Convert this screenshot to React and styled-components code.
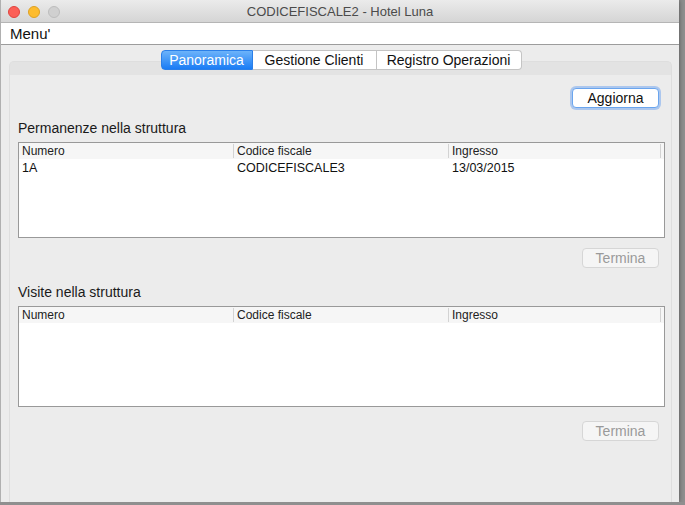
import React from 'react';
import styled, { createGlobalStyle, css } from 'styled-components';

const GlobalStyle = createGlobalStyle`
  html, body {
    margin: 0;
    padding: 0;
    background: #8f8f8f;
    overflow: hidden;
  }
  * {
    box-sizing: border-box;
  }
`;

const tabs = [
  { label: 'Panoramica', w: 92 },
  { label: 'Gestione Clienti', w: 124 },
  { label: 'Registro Operazioni', w: 145 },
];
const columns = ['Numero', 'Codice fiscale', 'Ingresso'];

const Window = styled.div`
  width: 679px;
  height: 502px;
  display: flex;
  flex-direction: column;
  background: #ececec;
  font-family: "Liberation Sans", Arial, sans-serif;
  color: #1a1a1a;
  box-shadow: 0 0 5px rgba(0, 0, 0, 0.45);
  border-left: 1px solid #b0b0b0;
`;

const TitleBar = styled.div`
  position: relative;
  height: 23px;
  display: flex;
  align-items: center;
  justify-content: center;
  background: linear-gradient(#ebebeb, #d5d5d5);
  border-bottom: 1px solid #b5b5b5;
  font-size: 13px;
  color: #4b4b4b;
`;

const Lights = styled.div`
  position: absolute;
  left: 7px;
  top: 6px;
  display: flex;
  gap: 8px;
`;

const Light = styled.span`
  width: 12px;
  height: 12px;
  border-radius: 50%;
  background: ${({ color }) => color};
  border: 1px solid ${({ edge }) => edge};
`;

const MenuBar = styled.div`
  height: 22px;
  display: flex;
  align-items: center;
  padding-left: 9px;
  background: #ffffff;
  border-bottom: 1px solid #9c9c9c;
  font-size: 15px;
  color: #111;
`;

const Body = styled.div`
  flex: 1;
  padding: 5px 7px 0 8px;
  display: flex;
  flex-direction: column;
`;

const TabStrip = styled.div`
  display: flex;
  justify-content: center;
  margin-bottom: -9px;
  position: relative;
  z-index: 1;
  padding-left: 1px;
`;

const Tab = styled.div`
  height: 20px;
  width: ${({ w }) => w}px;
  display: flex;
  align-items: center;
  justify-content: center;
  font-size: 14px;
  background: #ffffff;
  border: 1px solid #c4c4c4;
  border-left: none;
  color: #111;

  &:first-child {
    border-left: 1px solid #c4c4c4;
    border-radius: 4px 0 0 4px;
  }
  &:last-child {
    border-radius: 0 4px 4px 0;
  }

  ${({ active }) =>
    active &&
    css`
      background: linear-gradient(#6cb3fa, #1a7cf5);
      border-color: #2a7fe8 !important;
      color: #ffffff;
    `}
`;

const Panel = styled.div`
  flex: 1;
  border: 1px solid #dedede;
  border-bottom: none;
  border-radius: 5px 5px 0 0;
  display: flex;
  flex-direction: column;
  background: linear-gradient(#e3e3e3 0, #e3e3e3 13px, #ececec 13px);
`;

const Content = styled.div`
  flex: 1;
  padding: 26px 6px 0 8px;
  display: flex;
  flex-direction: column;
`;

const ButtonRow = styled.div`
  display: flex;
  justify-content: flex-end;
  padding-right: 6px;
  margin-top: ${({ top }) => top}px;
`;

const Button = styled.div`
  height: 20px;
  width: ${({ w }) => w}px;
  display: flex;
  align-items: center;
  justify-content: center;
  font-size: 14px;
  border-radius: 4px;
  ${({ focused }) =>
    focused
      ? css`
          background: #ffffff;
          border: 1px solid #6aa5ee;
          box-shadow: 0 0 0 2px rgba(120, 170, 240, 0.55);
          color: #111;
        `
      : css`
          background: #f5f5f5;
          border: 1px solid #d6d6d6;
          color: #9a9a9a;
        `}
`;

const SectionLabel = styled.div`
  font-size: 14px;
  color: #1a1a1a;
  margin-top: ${({ top }) => top}px;
  height: 16px;
  line-height: 16px;
`;

const Table = styled.div`
  margin-top: 6px;
  height: ${({ h }) => h}px;
  background: #ffffff;
  border: 1px solid #999999;
`;

const HeaderRow = styled.div`
  height: 16px;
  display: grid;
  grid-template-columns: 215px 215px 212px 3px;
  background: #f6f6f6;
`;

const HeaderCell = styled.div`
  font-size: 12px;
  padding-left: 3px;
  color: #222;
  border-right: 1px solid #d3d3d3;
  margin: 1px 0;
  line-height: 14px;
  white-space: nowrap;
`;

const HeaderEnd = styled.div``;

const DataRow = styled.div`
  height: 18px;
  display: grid;
  grid-template-columns: 215px 215px 215px;
`;

const DataCell = styled.div`
  font-size: 12.5px;
  line-height: 18px;
  padding-left: 3px;
  color: #111;
`;

const DataTable = ({ h, rows }) => (
  <Table h={h}>
    <HeaderRow>
      {columns.map((c) => (
        <HeaderCell key={c}>{c}</HeaderCell>
      ))}
      <HeaderEnd />
    </HeaderRow>
    {rows.map((r, i) => (
      <DataRow key={i}>
        {r.map((v, j) => (
          <DataCell key={j}>{v}</DataCell>
        ))}
      </DataRow>
    ))}
  </Table>
);

const App = () => (
  <>
    <GlobalStyle />
    <Window>
      <TitleBar>
        <Lights>
          <Light color="#fc5f57" edge="#e0443e" />
          <Light color="#fdbc2e" edge="#dea123" />
          <Light color="#d0d0d0" edge="#bdbdbd" />
        </Lights>
        CODICEFISCALE2 - Hotel Luna
      </TitleBar>
      <MenuBar>Menu'</MenuBar>
      <Body>
        <TabStrip>
          {tabs.map((t, i) => (
            <Tab key={t.label} active={i === 0} w={t.w}>
              {t.label}
            </Tab>
          ))}
        </TabStrip>
        <Panel>
          <Content>
            <ButtonRow top={0}>
              <Button focused w={87}>Aggiorna</Button>
            </ButtonRow>
            <SectionLabel top={12}>Permanenze nella struttura</SectionLabel>
            <DataTable h={96} rows={[['1A', 'CODICEFISCALE3', '13/03/2015']]} />
            <ButtonRow top={10}>
              <Button w={77}>Termina</Button>
            </ButtonRow>
            <SectionLabel top={16}>Visite nella struttura</SectionLabel>
            <DataTable h={101} rows={[]} />
            <ButtonRow top={14}>
              <Button w={77}>Termina</Button>
            </ButtonRow>
          </Content>
        </Panel>
      </Body>
    </Window>
  </>
);

export default App;
